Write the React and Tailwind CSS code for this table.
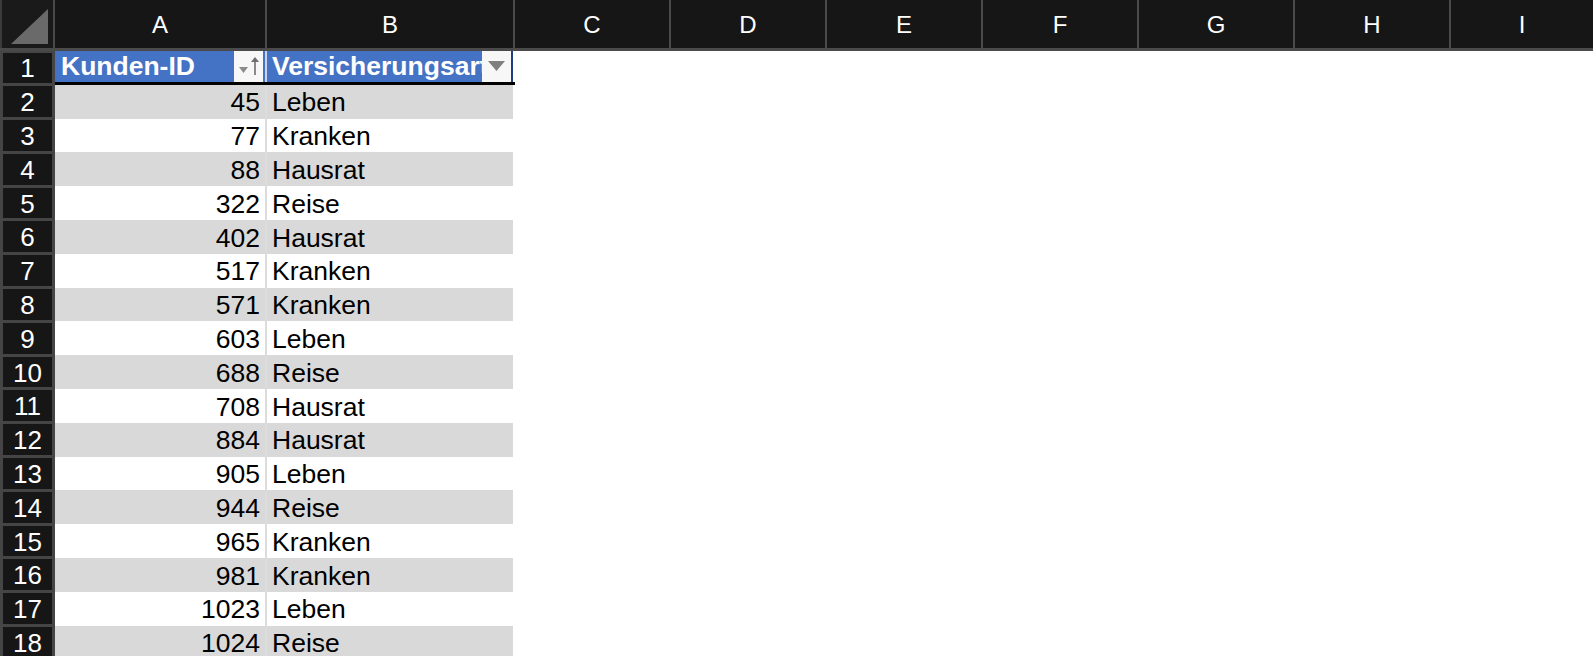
import React from "react";

const rows = [
  [45, "Leben"],
  [77, "Kranken"],
  [88, "Hausrat"],
  [322, "Reise"],
  [402, "Hausrat"],
  [517, "Kranken"],
  [571, "Kranken"],
  [603, "Leben"],
  [688, "Reise"],
  [708, "Hausrat"],
  [884, "Hausrat"],
  [905, "Leben"],
  [944, "Reise"],
  [965, "Kranken"],
  [981, "Kranken"],
  [1023, "Leben"],
  [1024, "Reise"],
];

const cols = ["C", "D", "E", "F", "G", "H", "I"];

function RowHead({ n }) {
  return (
    <div className="w-[55px] shrink-0 h-full bg-[#454545] pl-[3px] pr-[3px] py-[1.5px]">
      <div className="h-full bg-[#161616] flex items-center justify-center text-white text-[26px] leading-none pt-[1px]">
        {n}
      </div>
    </div>
  );
}

export default function App() {
  return (
    <div
      className="w-[1593px] h-[656px] bg-white overflow-hidden flex flex-col"
      style={{ fontFamily: '"Liberation Sans", Arial, Helvetica, sans-serif' }}
    >
      {/* column header */}
      <div className="flex h-[51px] shrink-0 bg-[#4a4a4a] pb-[3px] gap-[2px]">
        <div className="w-[53px] shrink-0 bg-[#1a1a1a] border-l-[2px] border-[#3a3a3a] flex items-end justify-end pr-[5px] pb-[4px]">
          <svg width="37" height="35" viewBox="0 0 37 35">
            <polygon points="37,0 37,35 0,35" fill="#6a6a6a" />
          </svg>
        </div>
        <div className="w-[210px] shrink-0 bg-[#161616] flex items-center justify-center text-white text-[24px] pt-[2px]">A</div>
        <div className="w-[246px] shrink-0 bg-[#161616] flex items-center justify-center text-white text-[24px] pt-[2px]">B</div>
        {cols.map((c, i) => (
          <div
            key={c}
            className={`${i === cols.length - 1 ? "flex-1" : "w-[154px] shrink-0"} bg-[#161616] flex items-center justify-center text-white text-[24px] pt-[2px]`}
          >
            {c}
          </div>
        ))}
      </div>

      {/* row 1 - table header */}
      <div className="flex h-[33.8px] shrink-0">
        <RowHead n={1} />
        <div className="flex w-[460px] shrink-0 border-b-[3px] border-black">
          <div className="w-[210px] shrink-0 bg-[#4472c4] flex items-center">
            <span className="flex-1 pl-[6px] text-white font-bold text-[26.5px] leading-none whitespace-nowrap overflow-hidden">Kunden-ID</span>
            <div className="w-[29px] h-full bg-[#f7f7f7] mr-[2px] flex items-center justify-center gap-[3px]">
              <svg width="9" height="6" viewBox="0 0 9 6" className="mt-[8px]">
                <polygon points="0,0 9,0 4.5,6" fill="#8a8a8a" />
              </svg>
              <svg width="8" height="18" viewBox="0 0 8 18">
                <polygon points="4,0 8,5 4.8,5 4.8,18 3.2,18 3.2,5 0,5" fill="#6e6e6e" />
              </svg>
            </div>
          </div>
          <div className="w-[2px] shrink-0 bg-[#c9d4ea]" />
          <div className="w-[246px] shrink-0 bg-[#4472c4] flex items-center border-r-[2px] border-[#1d3f80] overflow-hidden">
            <span className="flex-1 min-w-0 pl-[5px] text-white font-bold text-[26.5px] leading-none whitespace-nowrap overflow-hidden">Versicherungsart</span>
            <div className="w-[29px] shrink-0 h-full bg-[#f7f7f7] flex items-center justify-center">
              <svg width="17" height="10" viewBox="0 0 17 10">
                <polygon points="0,0 17,0 8.5,10" fill="#7f7f7f" />
              </svg>
            </div>
          </div>
        </div>
        <div className="flex-1" />
      </div>

      {rows.map(([id, art], i) => {
        const gray = i % 2 === 0;
        const bg = gray ? "bg-[#d9d9d9]" : "bg-white";
        return (
          <div key={id} className="flex h-[33.8px] shrink-0">
            <RowHead n={i + 2} />
            <div className={`w-[210px] shrink-0 ${bg} flex items-center justify-end pr-[5px] text-[26.5px] leading-none text-black pt-[2px]`}>
              {id}
            </div>
            <div className="w-[2px] shrink-0 bg-[#dcdcdc]" />
            <div className={`w-[246px] shrink-0 ${bg} flex items-center pl-[5px] text-[26.5px] leading-none text-black pt-[2px]`}>
              {art}
            </div>
            <div className="flex-1 bg-white" />
          </div>
        );
      })}
    </div>
  );
}
